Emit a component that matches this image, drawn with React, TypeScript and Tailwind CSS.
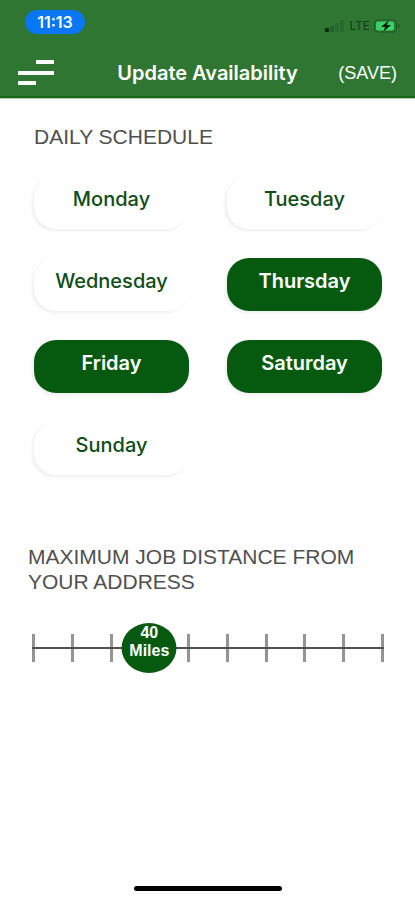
import { useState } from "react";

const DAYS = ["Monday", "Tuesday", "Wednesday", "Thursday", "Friday", "Saturday", "Sunday"];
const DISTANCES = [10, 20, 30, 40, 50, 60, 70, 80, 90, 100];

export default function App() {
    const [selected, setSelected] = useState(["Thursday", "Friday", "Saturday"]);
    const [miles, setMiles] = useState(40);

    function toggleDay(day: string) {
        setSelected((days) => (days.includes(day) ? days.filter((d) => d !== day) : [...days, day]));
    }

    return (
        <div className="flex min-h-screen flex-col bg-[#fefefe] font-['Liberation_Sans',Arial,sans-serif]">
            <header className="border-b-2 border-[#16661b] bg-[#2f7632] text-white shadow-[0_1px_1px_#b5ceb6]">
                <StatusBar />
                <div className="flex h-12 items-center justify-between px-[18px] pt-[2px]">
                    <button type="button" aria-label="Menu" className="w-20">
                        <MenuIcon />
                    </button>
                    <h1 className="font-['Inter',sans-serif] text-xl font-semibold whitespace-nowrap">
                        Update Availability
                    </h1>
                    <button type="button" className="w-20 text-right text-lg">
                        (SAVE)
                    </button>
                </div>
            </header>

            <main className="flex-1 pt-[26px]">
                <section className="pr-[33px] pl-[34px]">
                    <h2 className="text-[21px] leading-[25px] text-[#505050]">DAILY SCHEDULE</h2>
                    <div className="mt-[27px] grid grid-cols-2 gap-x-[38px] gap-y-[29px]">
                        {DAYS.map((day) => (
                            <DayButton
                                key={day}
                                day={day}
                                active={selected.includes(day)}
                                onClick={() => toggleDay(day)}
                            />
                        ))}
                    </div>
                </section>

                <section className="mt-[69px] pr-[31px] pl-7">
                    <h2 id="distance-label" className="text-[21px] leading-[25px] text-[#505050]">
                        MAXIMUM JOB DISTANCE FROM YOUR ADDRESS
                    </h2>
                    <DistanceSlider value={miles} onChange={setMiles} />
                </section>
            </main>

            <div className="mx-auto mb-[9px] h-[5px] w-[148px] rounded-full bg-black" />
        </div>
    );
}

function StatusBar() {
    return (
        <div className="flex h-12 items-start justify-between pt-[10px] pr-[15px] pl-[25px] font-['Inter',sans-serif]">
            <span className="flex h-6 w-[60px] items-center justify-center rounded-full bg-[#0876f5] text-base font-semibold">
                11:13
            </span>
            <div className="flex h-8 items-center gap-1 text-[#123d16]">
                <svg width="20" height="12" viewBox="0 0 20 12" aria-hidden="true">
                    <rect x="0" y="8" width="4" height="4" rx="1" fill="#082b0b" />
                    <rect x="5" y="6" width="4" height="6" rx="1" fill="#23602a" />
                    <rect x="10" y="3" width="4" height="9" rx="1" fill="#286a2d" />
                    <rect x="15" y="0" width="4" height="12" rx="1" fill="#286a2d" />
                </svg>
                <span className="text-xs">LTE</span>
                <svg width="26" height="14" viewBox="0 0 26 14" aria-hidden="true">
                    <rect x="0.5" y="1" width="22" height="12" rx="3.5" fill="none" stroke="#1c5722" />
                    <rect x="2" y="2.5" width="18" height="9" rx="2" fill="#3bd166" />
                    <path d="M24 5v4c1-.4 1.600-1.100 1.600-2S25 5.400 24 5Z" fill="#1c5722" />
                    <path d="M14.500 1.500 7 8h4l-1.500 4.500L17 6h-4Z" fill="#06200a" />
                </svg>
            </div>
        </div>
    );
}

function MenuIcon() {
    return (
        <svg width="36" height="26" viewBox="0 0 36 26" fill="#fff" aria-hidden="true">
            <rect x="18" y="0" width="18" height="4" />
            <rect x="0" y="11" width="36" height="4" />
            <rect x="0" y="21" width="18" height="4" />
        </svg>
    );
}

type DayButtonProps = {
    day: string;
    active: boolean;
    onClick: () => void;
};

function DayButton({ day, active, onClick }: DayButtonProps) {
    return (
        <button
            type="button"
            aria-pressed={active}
            onClick={onClick}
            className={`h-[53px] rounded-[22px] pb-[7px] font-['Inter',sans-serif] text-xl shadow-[-2px_2px_3px_rgba(0,0,0,0.06)] ${
                active ? "bg-[#065a10] font-semibold text-white" : "bg-white font-medium text-[#104d18]"
            }`}
        >
            {day}
        </button>
    );
}

type DistanceSliderProps = {
    value: number;
    onChange: (value: number) => void;
};

function DistanceSlider({ value, onChange }: DistanceSliderProps) {
    const percent = ((value - 10) / 90) * 100;

    return (
        <div className="relative mt-[29px] ml-1 flex h-[50px] items-center">
            <div className="flex w-full justify-between">
                {DISTANCES.map((d) => (
                    <span key={d} className="h-7 w-[3px] bg-[#949494]" />
                ))}
            </div>
            <div className="absolute inset-x-0 h-[2px] bg-[#505050]" />
            <div
                className="absolute top-0 flex h-[50px] w-[55px] -translate-x-1/2 flex-col items-center rounded-[50%] bg-[#065a10] pt-px text-base leading-[18px] font-bold text-white"
                style={{ left: `${percent}%` }}
            >
                <span>{value}</span>
                <span>Miles</span>
            </div>
            <input
                type="range"
                min={10}
                max={100}
                step={10}
                value={value}
                aria-labelledby="distance-label"
                onChange={(e) => onChange(Number(e.target.value))}
                className="absolute inset-0 h-full w-full cursor-pointer opacity-0"
            />
        </div>
    );
}
